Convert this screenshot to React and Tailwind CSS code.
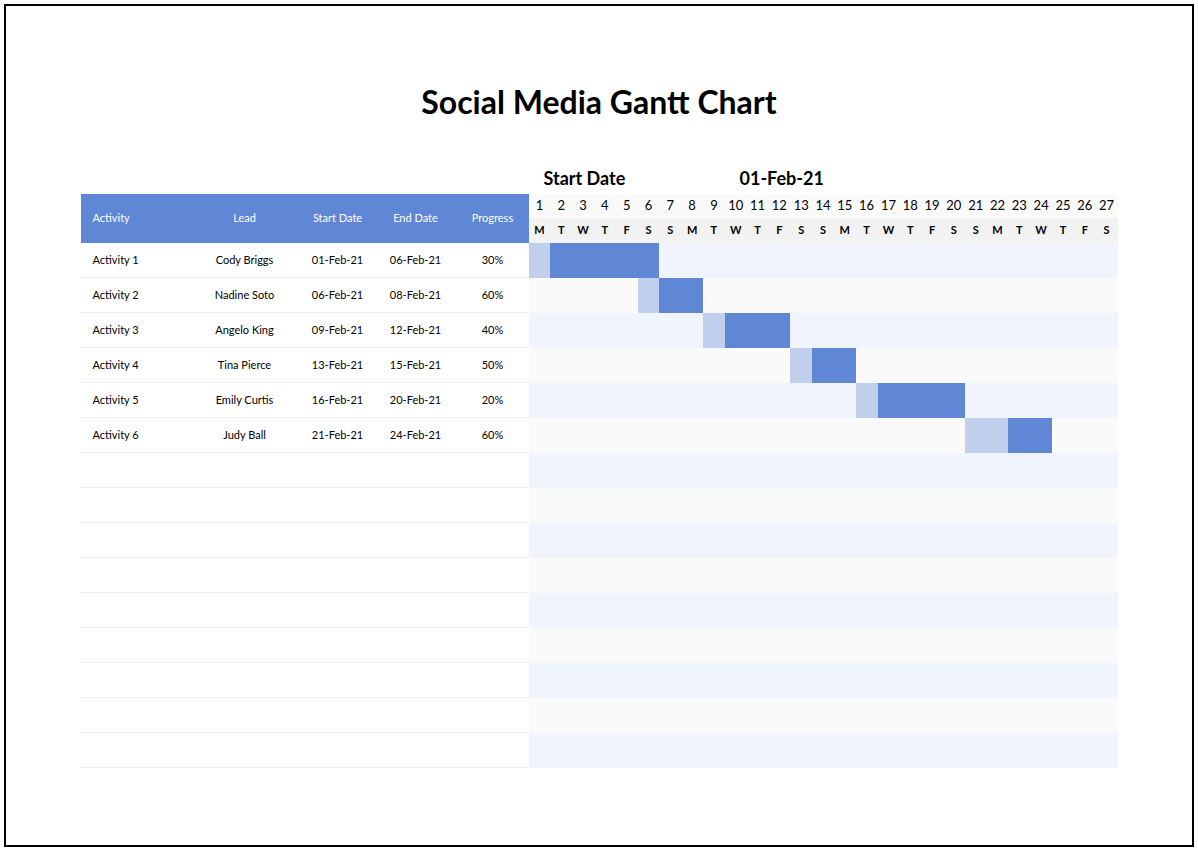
const acts=[["Activity 1","Cody Briggs","01-Feb-21","06-Feb-21","30%",1,1,6],["Activity 2","Nadine Soto","06-Feb-21","08-Feb-21","60%",6,1,8],["Activity 3","Angelo King","09-Feb-21","12-Feb-21","40%",9,1,12],["Activity 4","Tina Pierce","13-Feb-21","15-Feb-21","50%",13,1,15],["Activity 5","Emily Curtis","16-Feb-21","20-Feb-21","20%",16,1,20],["Activity 6","Judy Ball","21-Feb-21","24-Feb-21","60%",21,2,24]];
const days="MTWTFSS";
export default function App(){
const rows=Array.from({length:15},(_,i)=>acts[i]);
const cw=589/27;
return(<div className="w-[1198px] h-[851px] bg-white p-[4px]" style={{fontFamily:"Lato, 'Open Sans', sans-serif"}}>
<div className="w-full h-full border-2 border-black flex flex-col items-center">
<div className="mt-[76px] text-[32px] font-bold text-black leading-[40px]">Social Media Gantt Chart</div>
<div className="w-[1037px] mt-[44px] flex">
<div className="w-[448px]"/>
<div className="flex text-[18px] font-bold h-[24px] leading-[24px]"><span className="ml-[15px] w-[196px]">Start Date</span><span>01-Feb-21</span></div>
</div>
<div className="w-[1037px] mt-[4px] flex text-[11px] text-black">
<div className="w-[448px] flex flex-col">
<div className="h-[49px] bg-[#5f87d5] text-white flex items-center">
<div className="w-[108px] pl-[12px]">Activity</div><div className="w-[112px] text-center">Lead</div><div className="w-[74px] text-center">Start Date</div><div className="w-[82px] text-center">End Date</div><div className="w-[72px] text-center">Progress</div></div>
{rows.map((r,i)=><div key={i} className="h-[35px] border-b border-[#eeeeee] flex items-center">{r&&<><div className="w-[108px] pl-[12px]">{r[0]}</div><div className="w-[112px] text-center">{r[1]}</div><div className="w-[74px] text-center">{r[2]}</div><div className="w-[82px] text-center">{r[3]}</div><div className="w-[72px] text-center">{r[4]}</div></>}</div>)}
</div>
<div className="w-[589px] flex flex-col">
<div className="h-[24px] bg-[#fafafa] grid grid-cols-[repeat(27,1fr)] text-[13px] items-center">{Array.from({length:27},(_,i)=><div key={i} className="text-center">{i+1}</div>)}</div>
<div className="h-[25px] bg-[#f2f2f2] grid grid-cols-[repeat(27,1fr)] text-[11px] font-bold items-center">{Array.from({length:27},(_,i)=><div key={i} className="text-center">{days[i%7]}</div>)}</div>
{rows.map((r,i)=><div key={i} className={"h-[35px] relative "+(i%2==0?"bg-[#f0f4fc]":"bg-[#fafafa]")}>{r&&<>
<div className="absolute top-0 bottom-0 bg-[#bfcfec]" style={{left:(r[5]-1)*cw,width:r[6]*cw}}/>
<div className="absolute top-0 bottom-0 bg-[#5f87d5]" style={{left:(r[5]-1+r[6])*cw,width:(r[7]-r[5]+1-r[6])*cw}}/></>}</div>)}
</div>
</div>
</div></div>);}
